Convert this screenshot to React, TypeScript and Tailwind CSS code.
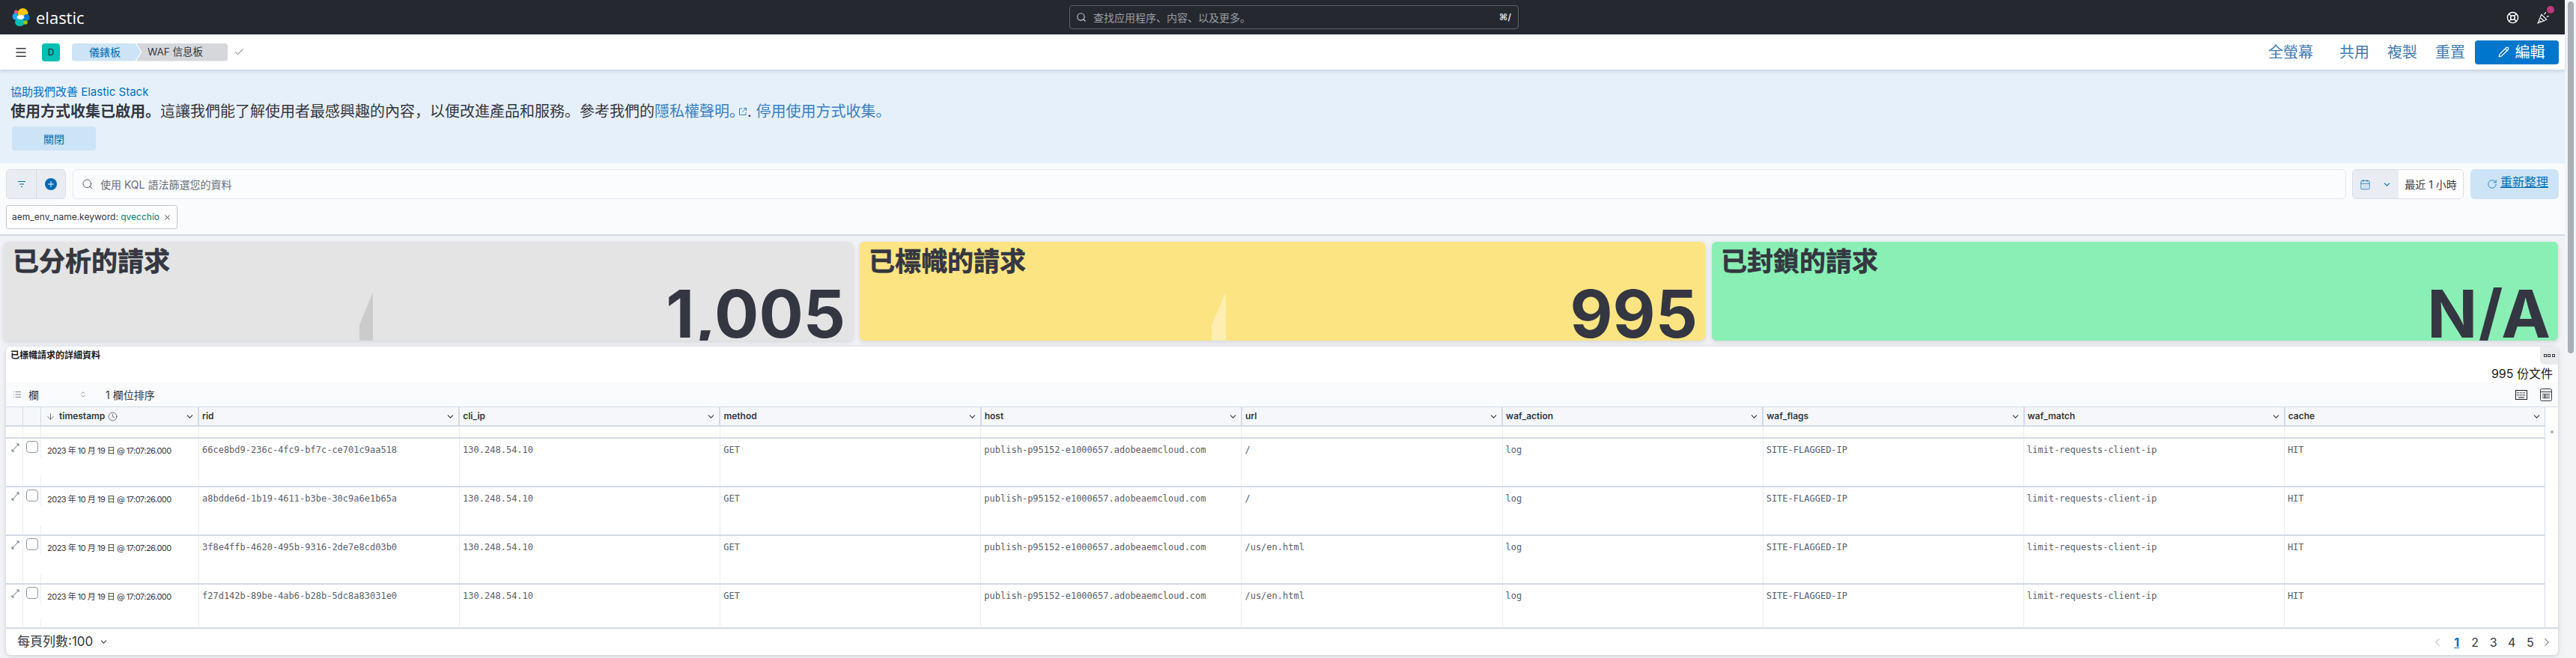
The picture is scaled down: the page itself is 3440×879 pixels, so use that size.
import { ArrowDown, CalendarDays, ChevronDown, ChevronLeft, ChevronRight, Clock, LifeBuoy, List, Menu, Pencil, Plus, RotateCw, Search, X, Check, ChevronsUpDown } from "lucide-react";

const font = "font-['Inter','Noto_Sans_CJK_SC',sans-serif]";
const columns = ["rid", "cli_ip", "method", "host", "url", "waf_action", "waf_flags", "waf_match", "cache"];

const rows = [
  { rid: "66ce8bd9-236c-4fc9-bf7c-ce701c9aa518", url: "/", h: "h-[65px]" },
  { rid: "a8bdde6d-1b19-4611-b3be-30c9a6e1b65a", url: "/", h: "h-[65px]" },
  { rid: "3f8e4ffb-4620-495b-9316-2de7e8cd03b0", url: "/us/en.html", h: "h-[65px]" },
  { rid: "f27d142b-89be-4ab6-b28b-5dc8a83031e0", url: "/us/en.html", h: "h-[60px]" },
];

function ElasticLogo() {
  return (
    <svg width="24" height="26" viewBox="0 0 24 26">
      <ellipse cx="14.5" cy="7.5" rx="7" ry="6.5" fill="#fec514" />
      <ellipse cx="10.5" cy="19.5" rx="6.5" ry="5.5" fill="#00bfb3" />
      <circle cx="5.5" cy="6" r="2.6" fill="#f04e98" />
      <ellipse cx="4.5" cy="12" rx="4" ry="4.5" fill="#1ba9f5" />
      <ellipse cx="19.5" cy="13.5" rx="4.2" ry="4.5" fill="#0077cc" />
      <circle cx="18" cy="20" r="2.8" fill="#93c90e" />
      <ellipse cx="11.5" cy="13" rx="5" ry="3" fill="#ffffff" />
    </svg>
  );
}

function Metric({ title, value, bg, children }: { title: string; value: string; bg: string; children?: React.ReactNode }) {
  return (
    <div className={`relative h-[132px] overflow-hidden rounded-md shadow-[0_2px_6px_rgba(0,0,0,0.12)] ${bg}`}>
      {children}
      <div className="absolute left-[12px] top-[3px] text-[35px] font-bold leading-[46px] text-[#343741] [-webkit-text-stroke:0.6px_#343741]">{title}</div>
      <div className="absolute bottom-[-14px] right-[10px] text-[88px] font-bold leading-[100px] text-[#343741]">{value}</div>
    </div>
  );
}

function Cell({ children, className = "" }: { children?: React.ReactNode; className?: string }) {
  return <div className={`min-w-0 flex-1 overflow-hidden whitespace-nowrap border-r border-[#e9ecf2] px-[4px] pt-[6px] ${className}`}>{children}</div>;
}

export default function App() {
  return (
    <div className={`flex h-[879px] w-[3440px] overflow-hidden bg-[#f0f2f6] ${font}`}>
      <div className="flex w-[3425px] flex-col">
        {/* top bar */}
        <div className="flex h-[46px] items-center bg-[#25282f] pl-[16px] pr-[20px]">
          <div className="flex w-[1412px] items-center gap-[8px]">
            <ElasticLogo />
            <span className="font-['Open_Sans',sans-serif] text-[22px] leading-none text-white">elastic</span>
          </div>
          <div className="flex h-[32px] w-[600px] items-center rounded-[4px] border border-[#5d6066] pl-[8px] pr-[9px]">
            <Search size={14} className="text-[#c5c7cb]" />
            <span className="ml-[9px] flex-1 text-[14px] text-[#9a9da3]">查找应用程序、内容、以及更多。</span>
            <span className="text-[12px] font-semibold text-[#e6e7e9]">⌘/</span>
          </div>
          <div className="ml-auto flex items-center gap-[24px]">
            <LifeBuoy size={17} className="text-white" />
            <div className="relative">
              <svg width="17" height="17" viewBox="0 0 16 16" fill="none" stroke="#fff" strokeWidth="1">
                <path d="M1 15 5.5 4 12 10.5Z" />
                <path d="M3 12l3 2M4.3 8.5l5 4" />
                <path d="M9 4c1-1 2-2 2-3M12 7c1-.5 2-.7 3-.5" />
              </svg>
              <span className="absolute right-[-6px] top-[-7px] h-[10px] w-[10px] rounded-full bg-[#bd387c]" />
            </div>
          </div>
        </div>

        {/* dashboard toolbar */}
        <div className="relative z-10 flex h-[47px] items-center bg-white pl-[19px] pr-[8px] shadow-[0_2px_4px_rgba(60,80,110,0.2)]">
          <Menu size={18} className="text-[#343741]" strokeWidth={2} />
          <div className="ml-[19px] flex h-[24px] w-[24px] items-center justify-center rounded-[4px] bg-[#00bfb3] text-[12px] text-[#25282f]">D</div>
          <div className="ml-[16px] flex h-[24px] text-[14px]">
            <div className="flex w-[92px] items-center justify-center rounded-l-[4px] bg-[#cce4f5] pr-[4px] text-[#006bb4] [clip-path:polygon(0_0,92%_0,100%_50%,92%_100%,0_100%)]">儀錶板</div>
            <div className="ml-[-6px] flex w-[122px] items-center rounded-r-[4px] bg-[#d5d7db] pl-[15px] text-[13.5px] text-[#343741] [clip-path:polygon(0_0,100%_0,100%_100%,0_100%,6%_50%)]">WAF 信息板</div>
          </div>
          <Check size={15} strokeWidth={1.25} className="ml-[8px] text-[#343741]" />
          <div className="ml-auto flex items-center text-[20px] text-[#3f7cb1]">
            <span>全螢幕</span>
            <span className="ml-[35px]">共用</span>
            <span className="ml-[24px]">複製</span>
            <span className="ml-[24px]">重置</span>
            <button className="ml-[13px] flex h-[32px] w-[112px] items-center justify-center gap-[8px] rounded-[4px] bg-[#0077cc] pl-[12px] text-white">
              <Pencil size={15} />
              編輯
            </button>
          </div>
        </div>

        {/* telemetry banner */}
        <div className="flex h-[125px] flex-col bg-[#e6f0fa] pl-[14px] pt-[18px]">
          <div className="text-[15px] leading-[24px] text-[#0071c2]">協助我們改善 Elastic Stack</div>
          <div className="flex items-center text-[20px] leading-[28px] text-[#343741]">
            <span className="font-bold">使用方式收集已啟用。</span>
            <span>這讓我們能了解使用者最感興趣的內容，以便改進產品和服務。參考我們的</span>
            <span className="text-[#3a80c0]">隱私權聲明。</span>
            <svg width="12" height="12" viewBox="0 0 12 12" fill="none" stroke="#3a80c0" className="ml-[-8px]">
              <path d="M5 2H1.5v8.5H10V7M7 1.5h3.5V5M10.5 1.5 5.5 6.5" />
            </svg>
            <span>.&nbsp;</span>
            <span className="text-[#3a80c0]">停用使用方式收集。</span>
          </div>
          <button className="ml-[2px] mt-[6px] h-[32px] w-[112px] rounded-[4px] bg-[#cce4f5] text-[14px] text-[#006bb4]">關閉</button>
        </div>

        {/* query bar */}
        <div className="h-[97px] border-b-2 border-[#d3dae6] bg-[#fafbfd] px-[8px] pt-[8px]">
          <div className="flex h-[40px] items-stretch">
            <div className="flex w-[80px] rounded-[6px] border border-[#d8dde6] bg-[#e9edf3]">
              <div className="flex w-[40px] items-center justify-center border-r border-[#d3dae6]">
                <svg width="12" height="12" viewBox="0 0 12 12" stroke="#006bb4" fill="none">
                  <path d="M1 2.5h10M3 6h6M5 9.5h2" />
                </svg>
              </div>
              <div className="flex flex-1 items-center justify-center">
                <div className="flex h-[16px] w-[16px] items-center justify-center rounded-full bg-[#006bb4]">
                  <Plus size={12} className="text-white" strokeWidth={2} />
                </div>
              </div>
            </div>
            <div className="ml-[9px] flex w-[3036px] items-center rounded-[6px] border border-[#e3e7ef] bg-[#fbfcfd] pl-[11px]">
              <Search size={16} className="text-[#343741]" strokeWidth={1.25} />
              <span className="ml-[9px] text-[14px] text-[#69707d]">使用 KQL 語法篩選您的資料</span>
            </div>
            <div className="ml-[8px] flex w-[149px] overflow-hidden rounded-[6px] border border-[#d8dde6]">
              <div className="flex w-[61px] items-center gap-[15px] bg-[#e9edf3] pl-[9px] text-[#006bb4]">
                <CalendarDays size={15} strokeWidth={1.25} />
                <ChevronDown size={13} />
              </div>
              <div className="flex flex-1 items-center justify-center bg-white text-[14px] text-[#343741]">最近 1 小時</div>
            </div>
            <button className="ml-[9px] flex w-[118px] items-center justify-center gap-[4px] rounded-[6px] bg-[#cce4f5] pb-[6px] pl-[8px] text-[16px] text-[#006bb4] underline">
              <RotateCw size={14} strokeWidth={1.25} className="mt-[6px]" />
              重新整理
            </button>
          </div>
          <div className="mt-[8px] flex h-[32px] w-[229px] items-center rounded-[3px] border border-[#c2c5cc] bg-white pl-[7px] text-[12px] text-[#343741]">
            <span>aem_env_name.keyword:&nbsp;</span>
            <span className="text-[#017d73]">qvecchio</span>
            <X size={11} className="ml-[5px]" />
          </div>
        </div>

        {/* metrics */}
        <div className="mt-[8px] grid grid-cols-[1134px_1129px_1130px] gap-[9px] pl-[5px]">
          <Metric title="已分析的請求" value="1,005" bg="bg-[#e4e4e4]">
            <svg className="absolute left-[475px] top-0" width="18" height="132" viewBox="0 0 18 132">
              <path d="M0 132V111L18 67V132Z" fill="#cbcbcb" />
            </svg>
          </Metric>
          <Metric title="已標幟的請求" value="995" bg="bg-[#fde482]">
            <svg className="absolute left-[470px] top-0" width="19" height="132" viewBox="0 0 19 132">
              <path d="M0 132V111L19 67V132Z" fill="#feeeb0" />
            </svg>
          </Metric>
          <Metric title="已封鎖的請求" value="N/A" bg="bg-[#8aefb5]" />
        </div>

        {/* flagged requests table */}
        <div className="relative ml-[8px] mr-[9px] mt-[8px] h-[412px] overflow-hidden rounded-md bg-white shadow-[0_1px_5px_rgba(0,0,0,0.18)]">
          <div className="h-[48px] pl-[6px] pt-[2px] text-[12px] font-semibold leading-[20px] text-[#1a1c21]">
            已標幟請求的詳細資料
            <div className="absolute right-0 top-0 flex h-[24px] w-[24px] items-center justify-center gap-[1.5px] rounded-bl-[6px] bg-[#e9eaec]">
              <span className="h-[4px] w-[4px] border border-[#343741]" />
              <span className="h-[4px] w-[4px] border border-[#343741]" />
              <span className="h-[4px] w-[4px] border border-[#343741]" />
            </div>
            <div className="absolute right-[7px] top-[25px] text-[16px] font-normal leading-[22px]">995 份文件</div>
          </div>
          <div className="flex h-[32px] items-center bg-[#fafbfd] pl-[9px] pr-[8px] text-[14px] text-[#343741]">
            <List size={12} strokeWidth={1.25} />
            <span className="ml-[9px]">欄</span>
            <ChevronsUpDown size={10} strokeWidth={1.25} className="ml-[54px]" />
            <span className="ml-[25px]">1 欄位排序</span>
            <svg width="16" height="13" viewBox="0 0 16 13" fill="none" stroke="#1a1c21" className="ml-auto">
              <rect x="0.5" y="0.5" width="15" height="12" />
              <path d="M2 3.5h12M2 5.5h12M2 7.5h12" strokeDasharray="1 1" />
              <path d="M4 10h8" />
            </svg>
            <svg width="16" height="17" viewBox="0 0 16 17" fill="none" stroke="#343741" className="ml-[17px]">
              <rect x="0.5" y="0.5" width="15" height="16" rx="2" />
              <path d="M0.5 4.5h15M3 7.5h10M3 10h10M3 12.5h10M6.5 7v6.5" />
            </svg>
          </div>

          <div className="relative h-[295px] border-t border-[#d3dae6]">
            <div className="absolute right-[6px] top-[31px] h-[4px] w-[4px] rounded-full bg-[#a9adb5]" />
            <div className="mr-[17px] h-full border-r border-[#d3dae6]">
              <div className="flex h-[26px] border-b-2 border-[#d3dae6] bg-[#f5f7fa] text-[12px] font-semibold text-[#343741]">
                <div className="w-[23px] border-r border-[#d3dae6]" />
                <div className="w-[24px] border-r border-[#d3dae6]" />
                <div className="flex w-[211px] items-center border-r-2 border-[#d3dae6] pl-[6px] pr-[4px]">
                  <ArrowDown size={13} strokeWidth={1.25} />
                  <span className="ml-[5px]">timestamp</span>
                  <Clock size={13} strokeWidth={1.25} className="ml-[4px]" />
                  <ChevronDown size={13} className="ml-auto" />
                </div>
                {columns.map((c) => (
                  <div key={c} className="flex min-w-0 flex-1 items-center border-r-2 border-[#d3dae6] pl-[4px] pr-[4px] last:border-r-0">
                    {c}
                    <ChevronDown size={13} className="ml-auto" />
                  </div>
                ))}
              </div>
              <div className="flex h-[14px]">
                <div className="w-[23px] border-r border-[#e9ecf2]" />
                <div className="w-[24px] border-r border-[#e9ecf2]" />
                <div className="w-[211px] border-r border-[#e9ecf2]" />
                {columns.map((c) => <div key={c} className="flex-1 border-r border-[#e9ecf2] last:border-r-0" />)}
              </div>
              {rows.map((r) => (
                <div key={r.rid} className={`flex border-t-2 border-[#d3dae6] font-['DejaVu_Sans_Mono',monospace] text-[12px] leading-[18px] text-[#5a606b] ${r.h}`}>
                  <div className="flex w-[23px] justify-center border-r border-[#e9ecf2] pl-[2px] pt-[6px] text-[#69707d]">
                    <svg width="11" height="12" viewBox="0 0 11 12" fill="none" stroke="#69707d">
                      <path d="M1 11l9-10M7 1h3v3M1 8v3h3" />
                    </svg>
                  </div>
                  <div className="flex w-[24px] flex-col">
                    <div className="h-[25px] border-r border-[#e9ecf2] pl-[4px] pt-[3px]">
                      <div className="h-[16px] w-[16px] rounded-[4px] border border-[#8f96a3]" />
                    </div>
                    <div className="flex-1" />
                    <div className="h-[12px] border-r border-[#e9ecf2]" />
                  </div>
                  <div className={`w-[211px] border-r border-[#e9ecf2] pl-[8px] pt-[7px] ${font} text-[11px] tracking-[-0.5px] text-[#343741]`}>2023 年 10 月 19 日 @ 17:07:26.000</div>
                  <Cell>{r.rid}</Cell>
                  <Cell>130.248.54.10</Cell>
                  <Cell>GET</Cell>
                  <Cell>publish-p95152-e1000657.adobeaemcloud.com</Cell>
                  <Cell>{r.url}</Cell>
                  <Cell>log</Cell>
                  <Cell>SITE-FLAGGED-IP</Cell>
                  <Cell>limit-requests-client-ip</Cell>
                  <Cell className="border-r-0">HIT</Cell>
                </div>
              ))}
            </div>
          </div>

          <div className="flex h-[37px] items-center border-t-2 border-[#d3dae6] pl-[15px] pr-[6px] text-[#343741]">
            <span className="text-[17px]">每頁列數:100</span>
            <ChevronDown size={13} className="ml-[8px]" />
            <div className="ml-auto flex items-center text-[16px]">
              <ChevronLeft size={18} strokeWidth={1.25} className="mr-[5px] text-[#98a2b3]" />
              <span className="w-[24.5px] text-center font-bold text-[#0071c2] underline">1</span>
              <span className="w-[24.5px] text-center">2</span>
              <span className="w-[24.5px] text-center">3</span>
              <span className="w-[24.5px] text-center">4</span>
              <span className="w-[24.5px] text-center">5</span>
              <ChevronRight size={18} strokeWidth={1.25} className="ml-[1px]" />
            </div>
          </div>
        </div>
      </div>

      {/* page scrollbar */}
      <div className="w-[15px] bg-[#f3f4f6] pl-[4px] pt-[2px]">
        <div className="h-[470px] w-[8px] rounded-full bg-[#a9adb5]" />
      </div>
    </div>
  );
}
